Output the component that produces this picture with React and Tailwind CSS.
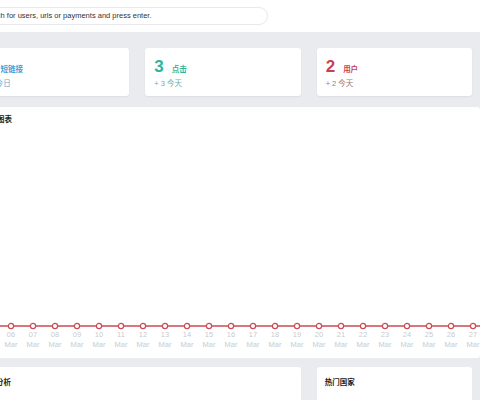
import React from "react";

const days = Array.from({ length: 24 }, (_, i) => String(i + 5).padStart(2, "0"));

function StatCard({ value, label, sub, color, subColor }) {
  return (
    <div className="bg-white rounded-[3px] shadow-[0_1px_2px_rgba(0,0,0,0.06)] h-[48px] px-[9px] pt-[9px]">
      <div className="flex items-baseline gap-[8px]">
        <span className={`text-[17px] leading-[20px] font-bold ${color}`}>{value}</span>
        <span className={`text-[7.5px] font-bold ${color}`}>{label}</span>
      </div>
      <div className={`text-[7.5px] leading-[10px] mt-[2px] ${subColor}`}>{sub}</div>
    </div>
  );
}

function LineChart() {
  const w = days.length * 22;
  return (
    <div className="pl-[4px]">
      <svg width={w} height="12" className="block">
        <line x1="0" y1="7" x2={w} y2="7" stroke="#cd4a55" strokeWidth="1.5" />
        {days.map((d, i) => (
          <circle key={d} cx={11 + i * 22} cy="7" r="2.6" fill="#fff" stroke="#cd4a55" strokeWidth="1.2" />
        ))}
      </svg>
      <div className="flex mt-[-1px] text-[7.5px] leading-[9.5px] text-[#c8cbd0]">
        {days.map((d) => (
          <div key={d} className="w-[22px] shrink-0 text-center">
            <div>{d}</div>
            <div>Mar</div>
          </div>
        ))}
      </div>
    </div>
  );
}

export default function App() {
  return (
    <div
      className="w-[480px] h-[400px] overflow-hidden bg-[#e9ebee]"
      style={{ fontFamily: '"Liberation Sans", "Noto Sans CJK SC", sans-serif' }}
    >
      <div className="h-[32px] bg-white flex items-center">
        <div className="ml-[-30px] w-[298px] h-[18px] rounded-full border border-[#e6e8eb] flex items-center pl-[10px] text-[7.5px] text-[#333]">
          Search for users, urls or payments and press enter.
        </div>
      </div>
      <div className="ml-[-26px] w-[498px] pt-[16px]">
        <div className="grid grid-cols-3 gap-[16px]">
          <StatCard value="5" label="短链接" sub="+ 5 今日" color="text-[#3aa0d8]" subColor="text-[#6aa9c9]" />
          <StatCard value="3" label="点击" sub="+ 3 今天" color="text-[#2bb59a]" subColor="text-[#6fae9f]" />
          <StatCard value="2" label="用户" sub="+ 2 今天" color="text-[#c9404f]" subColor="text-[#a0747a]" />
        </div>
        <div className="mt-[11px] mr-[-8px] bg-white rounded-[3px] h-[251px] overflow-hidden flex flex-col">
          <div className="pl-[8px] pt-[7px] text-[7.5px] font-bold text-[#222]">设备图表</div>
          <div className="mt-auto pb-[9px]">
            <LineChart />
          </div>
        </div>
        <div className="mt-[9px] grid grid-cols-3 gap-[16px]">
          <div className="col-span-2 bg-white rounded-[3px] h-[60px] pl-[7px] pt-[10px] text-[7.5px] font-bold text-[#222]">
            设备分析
          </div>
          <div className="bg-white rounded-[3px] h-[60px] pl-[8px] pt-[10px] text-[7.5px] font-bold text-[#222]">
            热门国家
          </div>
        </div>
      </div>
    </div>
  );
}
